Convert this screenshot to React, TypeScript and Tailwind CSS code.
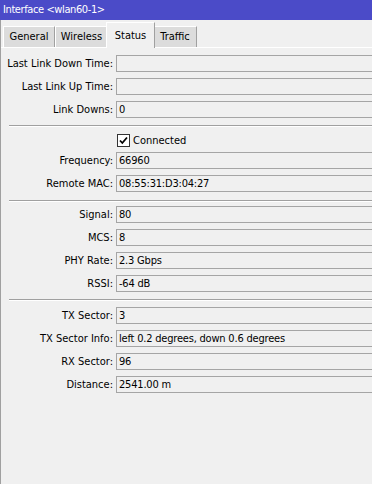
const font = { fontFamily: '"DejaVu Sans Condensed", "Liberation Sans", sans-serif' };

type Row = { label: string; value: string };

const linkRows: Row[] = [
  { label: 'Last Link Down Time:', value: '' },
  { label: 'Last Link Up Time:', value: '' },
  { label: 'Link Downs:', value: '0' },
];

const connRows: Row[] = [
  { label: 'Frequency:', value: '66960' },
  { label: 'Remote MAC:', value: '08:55:31:D3:04:27' },
];

const signalRows: Row[] = [
  { label: 'Signal:', value: '80' },
  { label: 'MCS:', value: '8' },
  { label: 'PHY Rate:', value: '2.3 Gbps' },
  { label: 'RSSI:', value: '-64 dB' },
];

const sectorRows: Row[] = [
  { label: 'TX Sector:', value: '3' },
  { label: 'TX Sector Info:', value: 'left 0.2 degrees, down 0.6 degrees' },
  { label: 'RX Sector:', value: '96' },
  { label: 'Distance:', value: '2541.00 m' },
];

const tabs = [
  { name: 'General', w: 'w-[52px]' },
  { name: 'Wireless', w: 'w-[53px]' },
  { name: 'Status', w: 'w-[49px]' },
  { name: 'Traffic', w: 'w-[44px]' },
];

function Field({ label, value }: Row) {
  return (
    <div className="flex items-center h-[17px]">
      <div className="w-[112px] shrink-0 text-right whitespace-nowrap">{label}</div>
      <div className="ml-[3px] h-[17px] w-[300px] shrink-0 border border-[#a5a5a5] bg-[#f0f0f0] pl-[2px] leading-[15px] tracking-[-0.2px] whitespace-nowrap">
        {value}
      </div>
    </div>
  );
}

function Separator({ className }: { className: string }) {
  return <div className={`ml-[8px] border-t border-b border-t-[#a0a0a0] border-b-white ${className}`} />;
}

function TabBar() {
  return (
    <div className="flex items-end h-[27px] pl-[2px]">
      {tabs.map((t) => {
        const active = t.name === 'Status';
        return active ? (
          <div
            key={t.name}
            className={`relative z-10 -mx-[2px] -mb-px h-[26px] ${t.w} text-center pt-[6px] bg-[#f0f0f0] border-t border-l border-white border-r border-r-[#a0a0a0]`}
          >
            {t.name}
          </div>
        ) : (
          <div
            key={t.name}
            className={`h-[21px] ${t.w} text-center pt-[3px] bg-[#dcdcdc] border-t border-l border-white border-r border-r-[#a0a0a0]`}
          >
            {t.name}
          </div>
        );
      })}
    </div>
  );
}

export default function App() {
  return (
    <div
      style={font}
      className="w-[372px] h-[484px] overflow-hidden bg-[#f0f0f0] text-black text-[11px] leading-[14px] flex flex-col"
    >
      <div className="h-[20px] shrink-0 bg-[#4b4bc8] text-white pl-[3px] leading-[19px] tracking-[-0.4px]">
        Interface &lt;wlan60-1&gt;
      </div>
      <div className="flex-1 flex flex-col border-l border-[#a0a0a0]">
        <TabBar />
        <div className="flex-1 border-t border-white">
          <div className="pt-[7px] flex flex-col gap-[6px]">
            {linkRows.map((r) => (
              <Field key={r.label} {...r} />
            ))}
          </div>
          <Separator className="mt-[7px]" />
          <div className="pt-[7px] flex items-center h-[20px] pl-[116px]">
            <div className="w-[13px] h-[13px] border border-[#333333] bg-white flex items-center justify-center">
              <svg width="9" height="9" viewBox="0 0 9 9">
                <path d="M1 4.5 L3.3 7 L8 1.5" fill="none" stroke="#000" strokeWidth="1.8" />
              </svg>
            </div>
            <span className="ml-[3px]">Connected</span>
          </div>
          <div className="mt-[5px] flex flex-col gap-[6px]">
            {connRows.map((r) => (
              <Field key={r.label} {...r} />
            ))}
          </div>
          <Separator className="mt-[8px]" />
          <div className="pt-[4px] flex flex-col gap-[6px]">
            {signalRows.map((r) => (
              <Field key={r.label} {...r} />
            ))}
          </div>
          <Separator className="mt-[7px]" />
          <div className="pt-[6px] flex flex-col gap-[6px]">
            {sectorRows.map((r) => (
              <Field key={r.label} {...r} />
            ))}
          </div>
        </div>
      </div>
    </div>
  );
}
